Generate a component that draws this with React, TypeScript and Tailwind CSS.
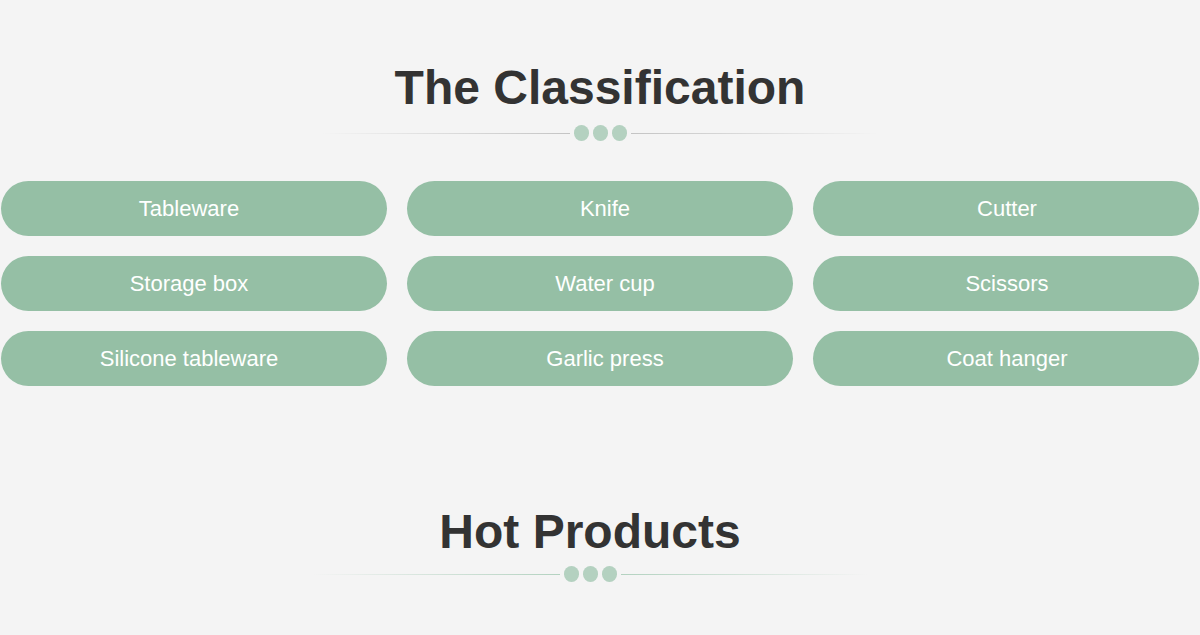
const categories = [
  'Tableware',
  'Knife',
  'Cutter',
  'Storage box',
  'Water cup',
  'Scissors',
  'Silicone tableware',
  'Garlic press',
  'Coat hanger',
];

// text inside each column sits a little off-centre in the reference
const colShift = ['pr-[10px]', 'pl-[10px]', 'pl-[2px]'];

function Divider({ tone }: { tone: 'grey' | 'green' }) {
  const left =
    tone === 'grey'
      ? 'bg-gradient-to-r from-transparent to-[#c4c4c4]'
      : 'bg-gradient-to-r from-transparent to-[#b3d2c0]';
  const right =
    tone === 'grey'
      ? 'bg-gradient-to-l from-transparent to-[#c4c4c4]'
      : 'bg-gradient-to-l from-transparent to-[#b3d2c0]';
  return (
    <div className="flex items-center w-[556px] mx-auto">
      <div className={`h-px flex-1 ${left}`} />
      <div className="flex gap-[4px] mx-[4px]">
        <span className="w-[15px] h-[16px] rounded-full bg-[#b4d1c0]" />
        <span className="w-[15px] h-[16px] rounded-full bg-[#b4d1c0]" />
        <span className="w-[15px] h-[16px] rounded-full bg-[#b4d1c0]" />
      </div>
      <div className={`h-px flex-1 ${right}`} />
    </div>
  );
}

export default function App() {
  return (
    <div className="min-h-[635px] bg-[#f4f4f4] font-['Liberation_Sans',Arial,sans-serif] overflow-hidden">
      <section className="pt-[58px]">
        <h2 className="text-center text-[48px] leading-[60px] font-bold text-[#333333]">
          The Classification
        </h2>
        <div className="mt-[7px]">
          <Divider tone="grey" />
        </div>
        <div className="grid grid-cols-3 gap-x-[20px] gap-y-[20px] mt-[40px] px-px">
          {categories.map((c, i) => (
            <div
              key={c}
              className={`h-[55px] rounded-full bg-[#95bfa5] flex items-center justify-center text-white text-[22px] ${colShift[i % 3]}`}
            >
              {c}
            </div>
          ))}
        </div>
      </section>
      <section className="pt-[116px] pr-[20px]">
        <h2 className="text-center text-[48px] leading-[60px] font-bold text-[#333333]">
          Hot Products
        </h2>
        <div className="mt-[4px]">
          <Divider tone="green" />
        </div>
      </section>
    </div>
  );
}
